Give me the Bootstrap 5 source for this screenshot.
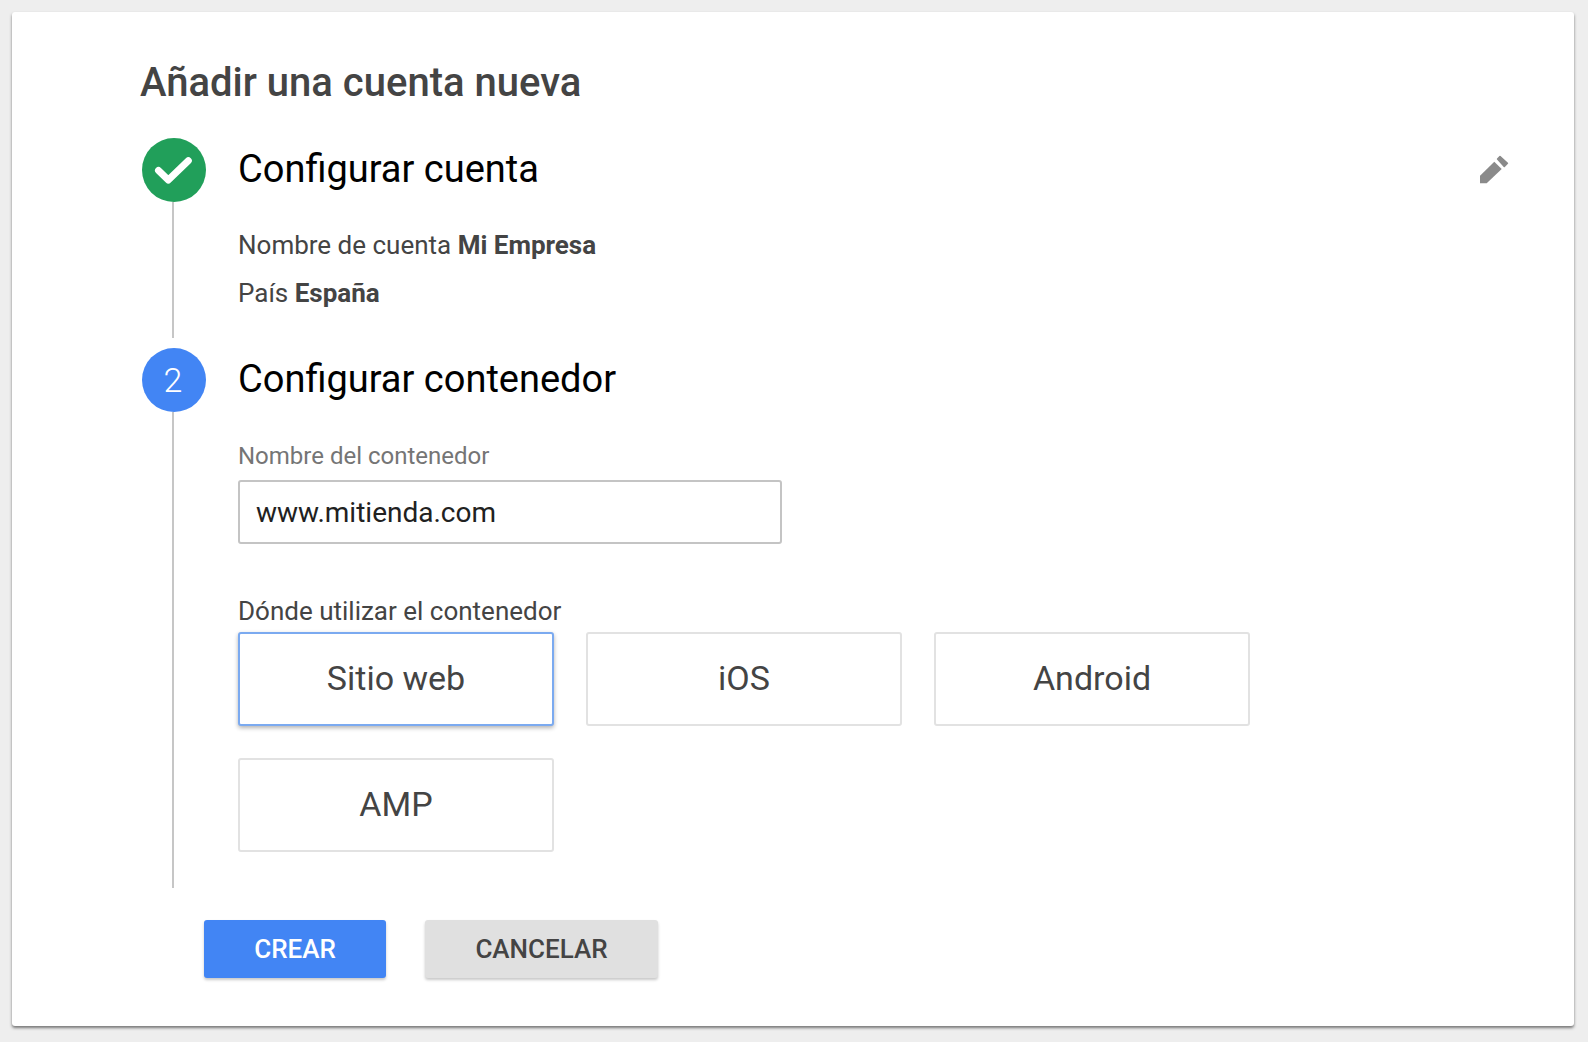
<!DOCTYPE html>
<html lang="es">
<head>
  <meta charset="UTF-8" />
  <title>Añadir una cuenta nueva</title>
  <link href="https://cdn.jsdelivr.net/npm/bootstrap@5.3.0/dist/css/bootstrap.min.css" rel="stylesheet"/>
  <style>
    body {
      font-family: Roboto, "Liberation Sans", sans-serif;
      background: #eeeeee;
      padding: 12px 14px 16px 12px;
      color: #444;
    }
    .panel {
      height: 1014px;
      background: #fff;
      border-radius: 3px;
      box-shadow: 0 2px 3px rgba(0,0,0,.5);
      padding: 46px 62px 0 128px;
    }
    .panel-title {
      font-size: 40px;
      font-weight: 500;
      line-height: 50px;
      color: #444;
      margin: 0 0 30px;
    }
    .step { gap: 32px; margin-left: 2px; }
    .step + .step { margin-top: 10px; }
    .rail { width: 64px; flex: none; }
    .step-dot {
      width: 64px;
      height: 64px;
      border-radius: 50%;
      color: #fff;
      font-size: 34px;
      font-weight: 300;
    }
    .dot-done { background: #219f5a; }
    .dot-active { background: #4285f4; padding-right: 2px; }
    .rail-line {
      flex: 1 1 auto;
      width: 2px;
      margin-left: 30px;
      background: #c6c6c6;
    }
    .step-head {
      font-size: 38px;
      line-height: 62px;
      padding-bottom: 2px;
      color: #000;
      font-weight: 400;
      margin: 0;
    }
    .step-edit { width: 38px; height: 38px; fill: #8a8a8a; }
    .summary { font-size: 26px; line-height: 48px; margin: 0; color: #444; }
    .summary b { font-weight: 700; }
    .step-one-body { padding-top: 19px; height: 136px; }
    .step-two-body { padding-bottom: 36px; }
    .name-label {
      font-size: 24px;
      line-height: 30px;
      color: #757575;
      margin: 29px 0 9px;
      display: block;
    }
    .name-input.form-control {
      width: 544px;
      height: 64px;
      font-size: 28px;
      padding: 0 16px;
      color: #212121;
      border: 2px solid #c4c4c4;
      border-radius: 3px;
      box-shadow: none;
    }
    .where-label {
      font-size: 26px;
      line-height: 30px;
      color: #444;
      margin: 52px 0 6px;
      display: block;
    }
    .where-grid {
      display: grid;
      grid-template-columns: repeat(3, 316px);
      grid-auto-rows: 94px;
      gap: 32px 32px;
    }
    .where-opt.btn {
      font-size: 34px;
      color: #444;
      background: #fff;
      border: 2px solid #e2e2e2;
      border-radius: 3px;
      padding: 0 0 2px;
    }
    .where-opt.btn.active {
      color: #444;
      background: #fff;
      border-color: #7baaf0;
      box-shadow: 0 2px 4px rgba(0,0,0,.3);
    }
    .form-actions { gap: 39px; margin: 32px 0 0 64px; }
    .act-btn.btn {
      height: 58px;
      font-size: 26px;
      font-weight: 500;
      border: 0;
      border-radius: 3px;
      padding: 0;
      box-shadow: 0 2px 3px rgba(0,0,0,.22);
    }
    .act-create.btn { width: 182px; background: #4285f4; color: #fff; }
    .act-cancel.btn { width: 233px; background: #e0e0e0; color: #444; }
  </style>
</head>
<body>
  <div class="panel">
    <h1 class="panel-title">Añadir una cuenta nueva</h1>

    <div class="step d-flex">
      <div class="rail d-flex flex-column">
        <div class="step-dot dot-done d-flex align-items-center justify-content-center">
          <svg width="64" height="64" viewBox="0 0 64 64"><path d="M16.5 32.5L26.3 42 46.3 22.7" fill="none" stroke="#fff" stroke-width="7" stroke-linecap="round" stroke-linejoin="round"/></svg>
        </div>
        <div class="rail-line"></div>
      </div>
      <div class="flex-grow-1">
        <div class="d-flex justify-content-between align-items-center">
          <h2 class="step-head">Configurar cuenta</h2>
          <svg class="step-edit" viewBox="0 0 38 38"><path d="M6 24.7L20.3 10.7 27.7 18 12.7 32.3H6z"/><path d="M23.6 8L26 5.6 33.4 12.3 30.3 15.4z" stroke="#8a8a8a" stroke-width="1.6" stroke-linejoin="round"/></svg>
        </div>
        <div class="step-one-body">
          <p class="summary">Nombre de cuenta <b>Mi Empresa</b></p>
          <p class="summary">País <b>España</b></p>
        </div>
      </div>
    </div>

    <div class="step d-flex">
      <div class="rail d-flex flex-column">
        <div class="step-dot dot-active d-flex align-items-center justify-content-center">2</div>
        <div class="rail-line"></div>
      </div>
      <div class="flex-grow-1">
        <h2 class="step-head">Configurar contenedor</h2>
        <div class="step-two-body">
          <label class="name-label" for="containerName">Nombre del contenedor</label>
          <input class="form-control name-input" id="containerName" type="text" value="www.mitienda.com"/>
          <span class="where-label">Dónde utilizar el contenedor</span>
          <div class="where-grid">
            <button type="button" class="btn where-opt active">Sitio web</button>
            <button type="button" class="btn where-opt">iOS</button>
            <button type="button" class="btn where-opt">Android</button>
            <button type="button" class="btn where-opt">AMP</button>
          </div>
        </div>
      </div>
    </div>

    <div class="form-actions d-flex">
      <button type="button" class="btn act-btn act-create">CREAR</button>
      <button type="button" class="btn act-btn act-cancel">CANCELAR</button>
    </div>
  </div>
  <script src="https://cdn.jsdelivr.net/npm/bootstrap@5.3.0/dist/js/bootstrap.bundle.min.js"></script>
</body>
</html>
